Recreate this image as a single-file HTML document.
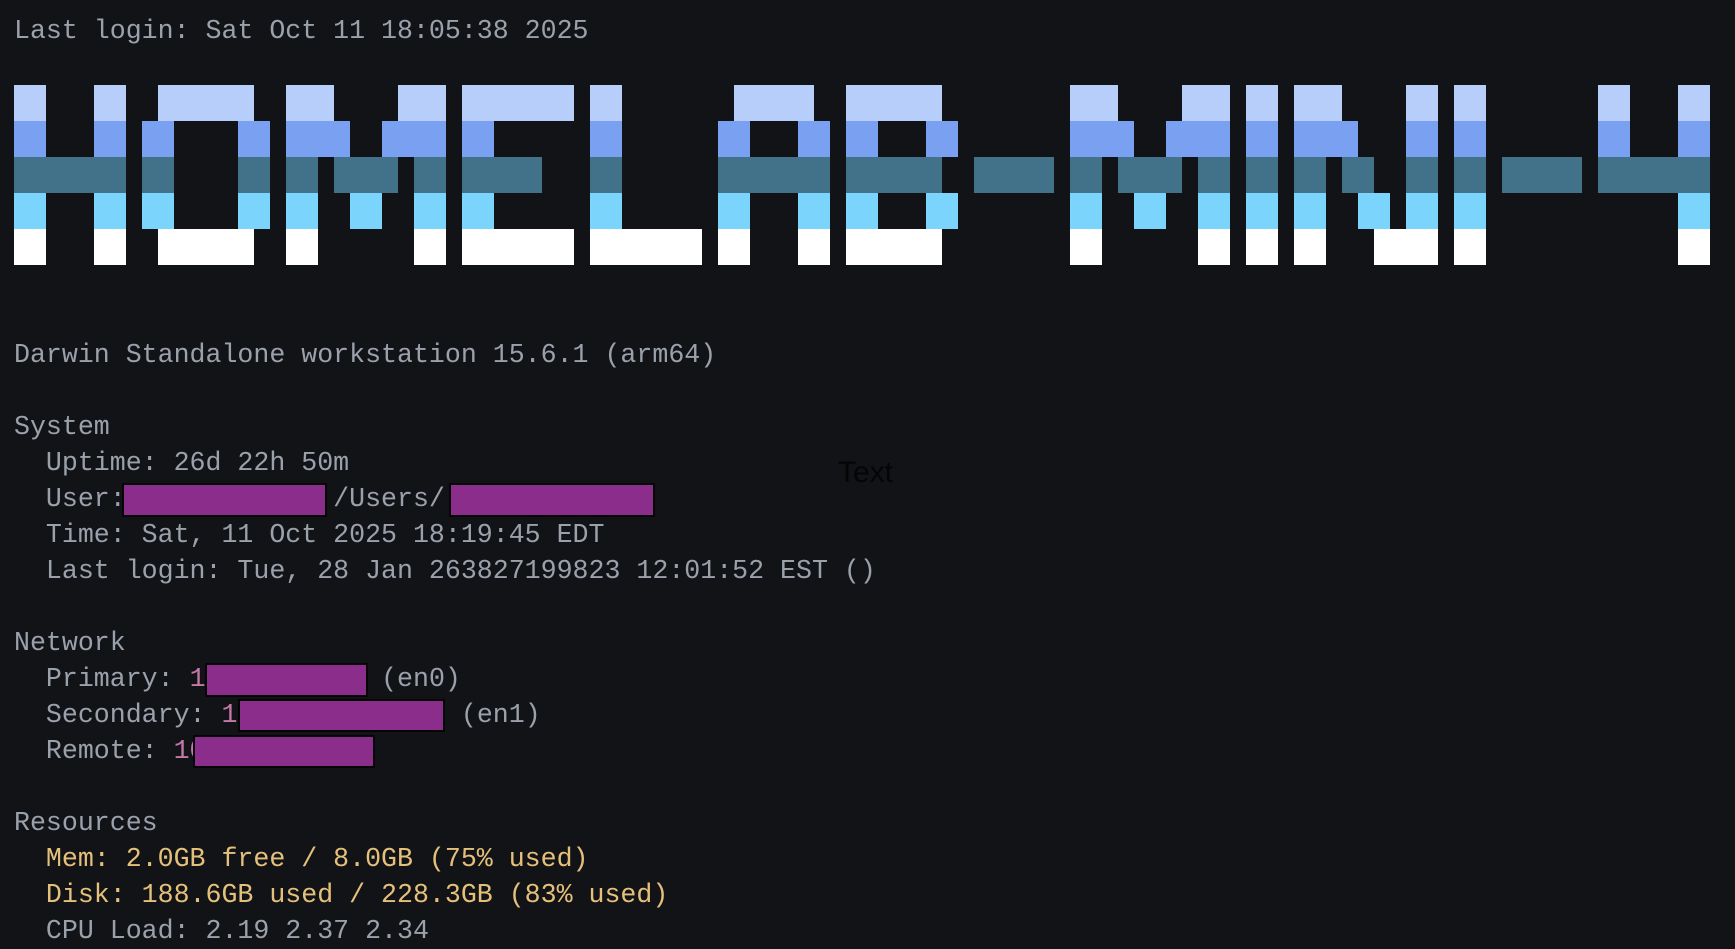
<!DOCTYPE html>
<html><head><meta charset="utf-8"><style>
html,body{margin:0;padding:0;background:#111317;width:1735px;height:949px;overflow:hidden}
.t{position:absolute;left:14px;font-family:"Liberation Mono",monospace;font-size:26.6px;line-height:36px;color:#9ba1ab;white-space:pre;height:36px}
.y{color:#e5c07b}.p{color:#c678a8}
.box{position:absolute;background:#8b2e8b;border:2px solid #050505;box-sizing:border-box}
svg{position:absolute;left:0;top:0}
</style></head><body>
<svg width="1735" height="300" id="b"></svg>
<div class="t" style="top:13px">Last login: Sat Oct 11 18:05:38 2025</div>
<div class="t" style="top:337px">Darwin Standalone workstation 15.6.1 (arm64)</div>
<div class="t" style="top:409px">System</div>
<div class="t" style="top:445px">  Uptime: 26d 22h 50m</div>
<div class="t" style="top:481px">  User:             /Users/</div>
<div class="t" style="top:517px">  Time: Sat, 11 Oct 2025 18:19:45 EDT</div>
<div class="t" style="top:553px">  Last login: Tue, 28 Jan 263827199823 12:01:52 EST ()</div>
<div class="t" style="top:625px">Network</div>
<div class="t" style="top:661px">  Primary: <span class="p">1</span>           (en0)</div>
<div class="t" style="top:697px">  Secondary: <span class="p">1</span>              (en1)</div>
<div class="t" style="top:733px">  Remote: <span class="p">10</span></div>
<div class="t" style="top:805px">Resources</div>
<div class="t y" style="top:841px">  Mem: 2.0GB free / 8.0GB (75% used)</div>
<div class="t y" style="top:877px">  Disk: 188.6GB used / 228.3GB (83% used)</div>
<div class="t" style="top:913px">  CPU Load: 2.19 2.37 2.34</div>
<div class="box" style="left:122px;top:483px;width:205px;height:34px"></div>
<div class="box" style="left:449px;top:483px;width:206px;height:34px"></div>
<div class="box" style="left:205px;top:663px;width:163px;height:34px"></div>
<div class="box" style="left:238px;top:699px;width:207px;height:33px"></div>
<div class="box" style="left:193px;top:735px;width:182px;height:33px"></div>
<div style="position:absolute;left:838px;top:455px;font-family:'Liberation Sans',sans-serif;font-size:30px;line-height:36px;color:#050505">Text</div>
<script>
var R=[
[[0,1],[5,6],[9,14],[17,19],[24,26],[28,34],[36,37],[45,49],[52,57],[66,68],[73,75],[77,78],[80,82],[87,88],[90,91],[99,100],[104,105]],
[[0,1],[5,6],[8,9],[14,15],[17,20],[23,26],[28,29],[36,37],[44,45],[49,50],[52,53],[57,58],[66,69],[72,75],[77,78],[80,83],[87,88],[90,91],[99,100],[104,105]],
[[0,6],[8,9],[14,15],[17,18],[20,23],[25,26],[28,32],[36,37],[44,50],[52,57],[60,64],[66,67],[69,72],[74,75],[77,78],[80,81],[83,84],[87,88],[90,91],[93,97],[99,105]],
[[0,1],[5,6],[8,9],[14,15],[17,18],[21,22],[25,26],[28,29],[36,37],[44,45],[49,50],[52,53],[57,58],[66,67],[70,71],[74,75],[77,78],[80,81],[84,85],[87,88],[90,91],[104,105]],
[[0,1],[5,6],[9,14],[17,18],[25,26],[28,34],[36,42],[44,45],[49,50],[52,57],[66,67],[74,75],[77,78],[80,81],[85,88],[90,91],[104,105]]];
var C=["#b8cefa","#7aa1f1","#41728a","#7bd4fb","#ffffff"];
var s="";
R.forEach(function(row,r){row.forEach(function(p){s+='<rect x="'+(14+16*p[0])+'" y="'+(85+36*r)+'" width="'+(16*(p[1]-p[0]+1))+'" height="36" fill="'+C[r]+'"/>';});});
document.getElementById("b").innerHTML=s;
</script>
</body></html>
